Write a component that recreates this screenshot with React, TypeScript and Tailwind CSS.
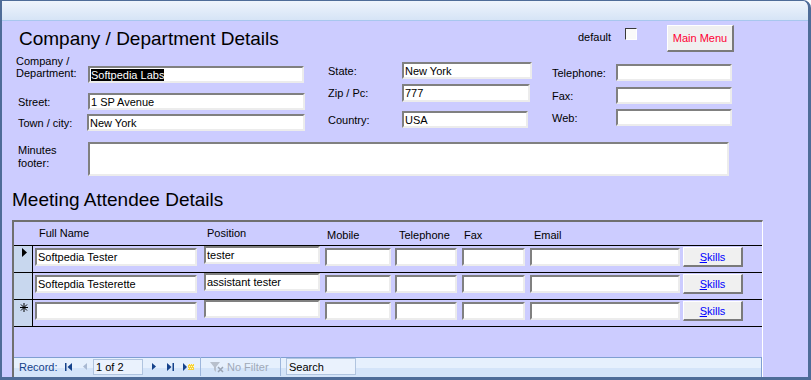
import React from "react";

// sunken Access-style text box
function Box({ className = "", children }: { className?: string; children?: React.ReactNode }) {
  return (
    <div
      className={`flex items-center overflow-hidden whitespace-nowrap border-2 border-t-[#808080] border-l-[#808080] border-b-[#ececec] border-r-[#ececec] bg-white pl-px text-[11px] leading-[12px] text-black ${className}`}
    >
      {children}
    </div>
  );
}

function Skills() {
  return (
    <div className="ml-[3px] mt-[1px] flex h-[20px] w-[60px] items-center justify-center border-t border-l border-b-2 border-r-2 border-t-white border-l-white border-b-[#7a7a7a] border-r-[#7a7a7a] bg-[#f0f0f0] text-[#0000ff]">
      <span>
        <span className="underline">S</span>kills
      </span>
    </div>
  );
}

type Row = { name: string; position: string; marker: "arrow" | "none" | "new" };

const rows: Row[] = [
  { name: "Softpedia Tester", position: "tester", marker: "arrow" },
  { name: "Softepdia Testerette", position: "assistant tester", marker: "none" },
  { name: "", position: "", marker: "new" },
];

export default function App() {
  return (
    <div className="flex h-[380px] w-[811px] flex-col overflow-hidden rounded-tr-[8px] border-t border-l-2 border-r-[3px] border-b-[3px] border-[#4e6c98] bg-[#ccccff] font-['Liberation_Sans',Arial,sans-serif] text-[11px] leading-[12px] text-black">
      {/* title strip */}
      <div className="h-[20px] shrink-0 border-b border-[#a8c7ee] bg-[linear-gradient(to_bottom,#eef4fc,#d6e4f6)]" />

      {/* company fields */}
      <div className="flex">
        <div className="flex flex-col pl-[14px]">
          <h1 className="ml-[3px] mt-[6px] text-[19px] font-normal leading-[23px]">Company / Department Details</h1>
          <div className="mt-[5px] flex items-start">
            <div className="w-[72px]">
              Company /<br />Department:
            </div>
            <Box className="mt-[11px] h-[17px] w-[216px]">
              <span className="bg-black text-white">Softpedia Labs</span>
            </Box>
          </div>
          <div className="mt-[10px] flex items-center">
            <div className="ml-[2px] w-[70px]">Street:</div>
            <Box className="h-[17px] w-[217px]">1 SP Avenue</Box>
          </div>
          <div className="mt-[4px] flex items-center">
            <div className="ml-[2px] w-[69px]">Town / city:</div>
            <Box className="h-[17px] w-[218px]">New York</Box>
          </div>
        </div>

        <div className="ml-[23px] mt-[41px] flex flex-col">
          <div className="flex items-center">
            <div className="w-[74px]">State:</div>
            <Box className="h-[17px] w-[130px]">New York</Box>
          </div>
          <div className="mt-[5px] flex items-center">
            <div className="w-[74px]">Zip / Pc:</div>
            <Box className="h-[18px] w-[128px]">777</Box>
          </div>
          <div className="mt-[9px] flex items-center">
            <div className="w-[74px]">Country:</div>
            <Box className="h-[17px] w-[126px]">USA</Box>
          </div>
        </div>

        <div className="ml-[20px] flex flex-col">
          <div className="mt-[4px] flex items-start">
            <span className="ml-[26px] mt-[6px] w-[47px]">default</span>
            <div className="mt-[3px] h-[12px] w-[12px] border border-t-[#3a3a3a] border-l-[#3a3a3a] border-b-white border-r-white bg-[#fafafa]" />
            <div className="ml-[30px] flex h-[27px] w-[67px] items-center justify-center border-t border-l border-b-2 border-r-2 border-t-white border-l-white border-b-[#7a7a7a] border-r-[#7a7a7a] bg-[#f0f0f0] text-[#ff0033]">
              Main Menu
            </div>
          </div>
          <div className="mt-[12px] flex items-center">
            <div className="w-[64px]">Telephone:</div>
            <Box className="h-[17px] w-[116px]" />
          </div>
          <div className="mt-[6px] flex items-center">
            <div className="w-[64px]">Fax:</div>
            <Box className="h-[17px] w-[116px]" />
          </div>
          <div className="mt-[5px] flex items-center">
            <div className="w-[64px]">Web:</div>
            <Box className="h-[17px] w-[116px]" />
          </div>
        </div>
      </div>

      <div className="mt-[11px] flex items-start pl-[16px]">
        <div className="mt-[2px] w-[70px] leading-[13px]">
          Minutes
          <br />
          footer:
        </div>
        <Box className="h-[34px] w-[641px]" />
      </div>

      <h2 className="mt-[12px] pl-[10px] text-[19px] font-normal leading-[23px]">Meeting Attendee Details</h2>

      {/* attendee subform */}
      <div className="ml-[10px] mt-[9px] flex h-[157px] w-[751px] flex-col border-t-2 border-l-2 border-r border-t-[#6f6f6f] border-l-[#6f6f6f] border-r-white">
        <div className="flex h-[24px] shrink-0 items-start border-b border-black">
          <div className="w-[19px]" />
          <div className="mt-[5px] w-[171px] pl-[6px]">Full Name</div>
          <div className="mt-[5px] w-[121px] pl-[3px]">Position</div>
          <div className="mt-[7px] w-[70px] pl-[2px]">Mobile</div>
          <div className="mt-[7px] w-[67px] pl-[4px]">Telephone</div>
          <div className="mt-[7px] w-[68px] pl-[2px]">Fax</div>
          <div className="mt-[7px] w-[153px] pl-[4px]">Email</div>
        </div>

        {rows.map((r, i) => (
          <div key={i} className="flex h-[27px] shrink-0 items-start border-b border-black">
            <div className="h-full w-[19px] border-r border-black bg-[#c8d7ee]">
              {r.marker === "arrow" && (
                <svg className="ml-[8px] mt-[2px]" width="5" height="9" viewBox="0 0 5 9">
                  <polygon points="0,0 5,4.5 0,9" fill="#000" />
                </svg>
              )}
              {r.marker === "new" && (
                <svg className="ml-[6px] mt-[3px]" width="8" height="9" viewBox="0 0 8 9">
                  <path d="M4 0V9M0 4.5H8M1 1.5L7 7.5M7 1.5L1 7.5" stroke="#000" strokeWidth="1" fill="none" />
                </svg>
              )}
            </div>
            <Box className="ml-[2px] mt-[2px] h-[18px] w-[162px] pl-[2px]">{r.name}</Box>
            <Box className="ml-[7px] h-[18px] w-[116px]">{r.position}</Box>
            <Box className="ml-[5px] mt-[2px] h-[18px] w-[66px]" />
            <Box className="ml-[4px] mt-[2px] h-[18px] w-[62px]" />
            <Box className="ml-[5px] mt-[2px] h-[18px] w-[63px]" />
            <Box className="ml-[5px] mt-[2px] h-[18px] w-[150px]" />
            <Skills />
          </div>
        ))}

        {/* record navigation */}
        <div className="mt-auto flex h-[20px] shrink-0 items-center border-t border-r border-[#7f9fd2] bg-[linear-gradient(to_bottom,#e6f0fd_50%,#d4e4f9_50%)] pb-[2px]">
          <span className="ml-[5px] w-[46px] text-[#15428b]">Record:</span>
          <svg width="7" height="8" viewBox="0 0 7 8">
            <rect x="0" y="0" width="1.5" height="8" fill="#15428b" />
            <polygon points="7,0 2.5,4 7,8" fill="#15428b" />
          </svg>
          <svg className="ml-[11px]" width="4" height="7" viewBox="0 0 4 7">
            <polygon points="4,0 0,3.5 4,7" fill="#a9b9d2" />
          </svg>
          <div className="ml-[6px] flex h-[16px] w-[50px] items-center border border-[#b0c4df] bg-[#eaf2fd] pl-[2px]">1 of 2</div>
          <svg className="ml-[9px]" width="4" height="7" viewBox="0 0 4 7">
            <polygon points="0,0 4,3.5 0,7" fill="#15428b" />
          </svg>
          <svg className="ml-[11px]" width="7" height="8" viewBox="0 0 7 8">
            <polygon points="0,0 4.5,4 0,8" fill="#15428b" />
            <rect x="5.5" y="0" width="1.5" height="8" fill="#15428b" />
          </svg>
          <svg className="ml-[9px]" width="11" height="8" viewBox="0 0 11 8">
            <polygon points="0,0 4,4 0,8" fill="#15428b" />
            <rect x="5" y="1" width="6" height="6" fill="#f6d23a" />
            <path d="M5 1h1v1H5zM7 1h1v1H7zM9 1h1v1H9zM6 3h1v1H6zM8 3h1v1H8zM10 3h1v1h-1zM5 5h1v1H5zM7 5h1v1H7zM9 5h1v1H9z" fill="#fff6c8" />
          </svg>
          <div className="ml-[6px] h-[19px] w-px bg-[#9db6dc]" />
          <svg className="ml-[9px]" width="14" height="12" viewBox="0 0 14 12">
            <path d="M0 1H10L6 6V11L4 9V6Z" fill="#b8c0cc" />
            <path d="M8 6L13 11M13 6L8 11" stroke="#9aa4b4" strokeWidth="1.5" />
          </svg>
          <span className="ml-[3px] w-[53px] text-[#a0a9b8]">No Filter</span>
          <div className="h-[19px] w-px bg-[#9db6dc]" />
          <div className="ml-[5px] flex h-[17px] w-[70px] items-center border border-[#b0c4df] bg-[#eaf2fd] pl-[2px]">Search</div>
        </div>
      </div>
    </div>
  );
}
